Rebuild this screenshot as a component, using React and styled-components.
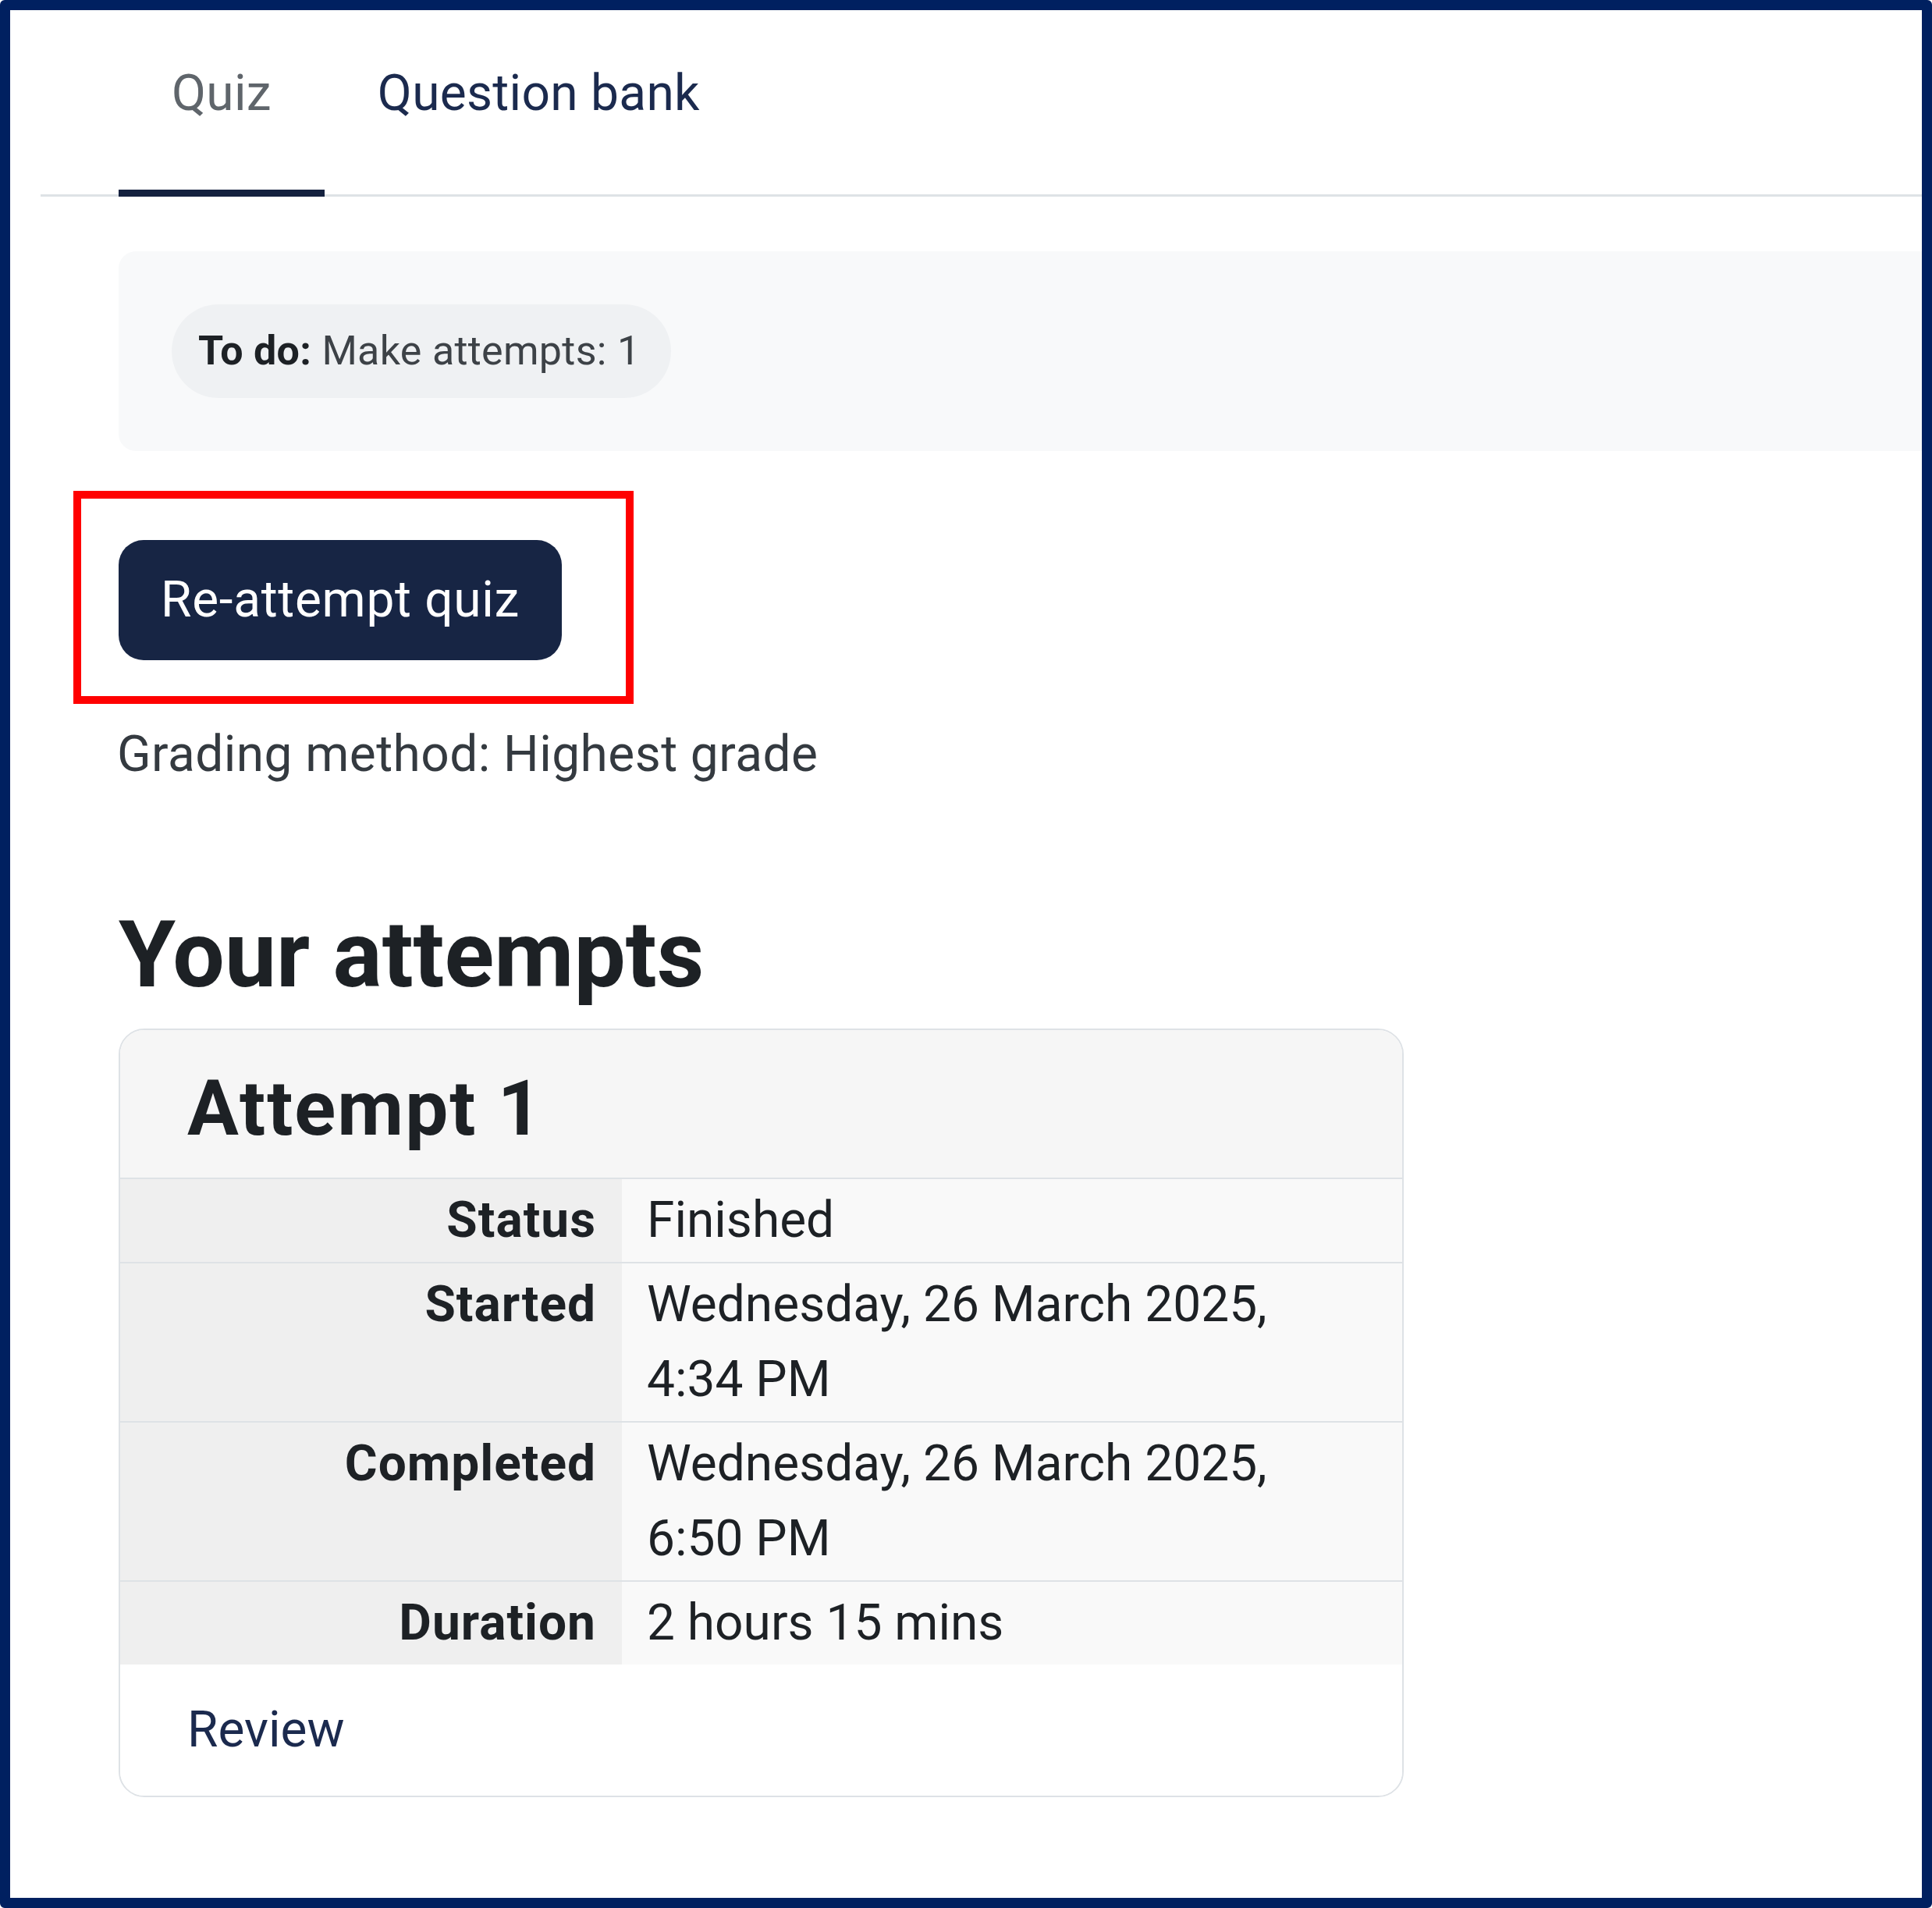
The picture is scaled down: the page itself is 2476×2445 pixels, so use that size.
import React from 'react';
import styled, { createGlobalStyle } from 'styled-components';

const GlobalStyle = createGlobalStyle`
  html, body {
    margin: 0;
    padding: 0;
    background: #ffffff;
  }
  body {
    font-family: Roboto, "Open Sans", "Liberation Sans", sans-serif;
    color: #1d2125;
  }
`;

const attempt = {
  title: 'Attempt 1',
  rows: [
    { label: 'Status', value: 'Finished' },
    { label: 'Started', value: 'Wednesday, 26 March 2025, 4:34 PM' },
    { label: 'Completed', value: 'Wednesday, 26 March 2025, 6:50 PM' },
    { label: 'Duration', value: '2 hours 15 mins' },
  ],
};

export default function App () {
  return (
    <>
      <GlobalStyle />
      <Frame>
        <TabBar>
          <Tab active>Quiz</Tab>
          <Tab>Question bank</Tab>
        </TabBar>
        <Main>
          <InfoBox>
            <TodoPill>
              <strong>To do:</strong>&nbsp;Make attempts: 1
            </TodoPill>
          </InfoBox>

          <ButtonWrap>
            <PrimaryButton>Re-attempt quiz</PrimaryButton>
            <Highlight />
          </ButtonWrap>

          <GradingText>Grading method: Highest grade</GradingText>

          <SectionTitle>Your attempts</SectionTitle>

          <Card>
            <CardHeader>{attempt.title}</CardHeader>
            <AttemptTable>
              <tbody>
                {attempt.rows.map(row => (
                  <Row key={row.label}>
                    <LabelCell>{row.label}</LabelCell>
                    <ValueCell>{row.value}</ValueCell>
                  </Row>
                ))}
              </tbody>
            </AttemptTable>
            <CardFooter>
              <ReviewLink href="#">Review</ReviewLink>
            </CardFooter>
          </Card>
        </Main>
      </Frame>
    </>
  );
}

const Frame = styled.div`
  box-sizing: border-box;
  width: 2476px;
  height: 2445px;
  border: 13px solid #002060;
  border-radius: 6px;
  background: #ffffff;
  overflow: hidden;
`;

const TabBar = styled.nav`
  display: flex;
  margin-left: 39px;
  padding: 59px 0 0 100px;
  border-bottom: 3px solid #dee2e6;
`;

const Tab = styled.div`
  padding: 0 68px 75px;
  margin-bottom: -3px;
  font-size: 64px;
  line-height: 96px;
  letter-spacing: 0.3px;
  color: ${p => (p.active ? '#5f656b' : '#1b2a4e')};
  border-bottom: 9px solid ${p => (p.active ? '#14213f' : 'transparent')};
  white-space: nowrap;
`;

const Main = styled.main`
  padding-left: 139px;
`;

const InfoBox = styled.div`
  margin-top: 70px;
  margin-right: -40px;
  padding: 68px;
  background: #f8f9fa;
  border-radius: 22px;
`;

const TodoPill = styled.div`
  display: inline-flex;
  align-items: center;
  padding: 21px 40px 21px 34px;
  background: #eff1f3;
  border-radius: 60px;
  font-size: 52px;
  line-height: 78px;
  letter-spacing: 0.3px;
  color: #3d4247;

  strong {
    font-weight: 700;
    color: #1d2125;
  }
`;

const ButtonWrap = styled.div`
  position: relative;
  display: inline-block;
  margin-top: 114px;
`;

const PrimaryButton = styled.button`
  display: block;
  margin: 0;
  padding: 29px 54px;
  border: none;
  border-radius: 32px;
  background: #172544;
  color: #ffffff;
  font-family: Roboto, "Open Sans", sans-serif;
  font-size: 64px;
  line-height: 96px;
  letter-spacing: 0.7px;
  cursor: pointer;
`;

const Highlight = styled.span`
  position: absolute;
  top: -63px;
  left: -58px;
  right: -92px;
  bottom: -56px;
  border: 10px solid #ff0000;
  pointer-events: none;
`;

const GradingText = styled.p`
  margin: 73px 0 0 -2px;
  font-size: 64px;
  line-height: 96px;
  letter-spacing: 0.45px;
  color: #343a40;
`;

const SectionTitle = styled.h2`
  margin: 139px 0 0;
  font-size: 118px;
  line-height: 1.2;
  font-weight: 700;
  color: #1d2125;
`;

const Card = styled.section`
  width: 1647px;
  box-sizing: border-box;
  margin-top: 22px;
  border: 2px solid #dee2e6;
  border-radius: 33px;
  overflow: hidden;
  background: #ffffff;
`;

const CardHeader = styled.h3`
  margin: 0;
  padding: 42px 86px 30px;
  background: #f6f6f6;
  border-bottom: 2px solid #dee2e6;
  font-size: 98px;
  line-height: 1.2;
  font-weight: 700;
  letter-spacing: 2px;
  color: #1d2125;
`;

const AttemptTable = styled.table`
  width: 100%;
  border-collapse: collapse;
  font-size: 64px;
  line-height: 96px;
`;

const Row = styled.tr`
  border-bottom: 2px solid #dee2e6;
  &:last-child {
    border-bottom: none;
  }
`;

const LabelCell = styled.th`
  width: 643px;
  box-sizing: border-box;
  padding: 5px 33px 5px 0;
  text-align: right;
  vertical-align: top;
  font-weight: 700;
  letter-spacing: 1px;
  background: #efefef;
  color: #1d2125;
`;

const ValueCell = styled.td`
  padding: 5px 40px 5px 32px;
  text-align: left;
  vertical-align: top;
  background: #f9f9f9;
  color: #1d2125;
`;

const CardFooter = styled.div`
  padding: 36px 86px;
  background: #ffffff;
`;

const ReviewLink = styled.a`
  font-size: 64px;
  line-height: 96px;
  color: #1b2a4e;
  text-decoration: none;
`;
